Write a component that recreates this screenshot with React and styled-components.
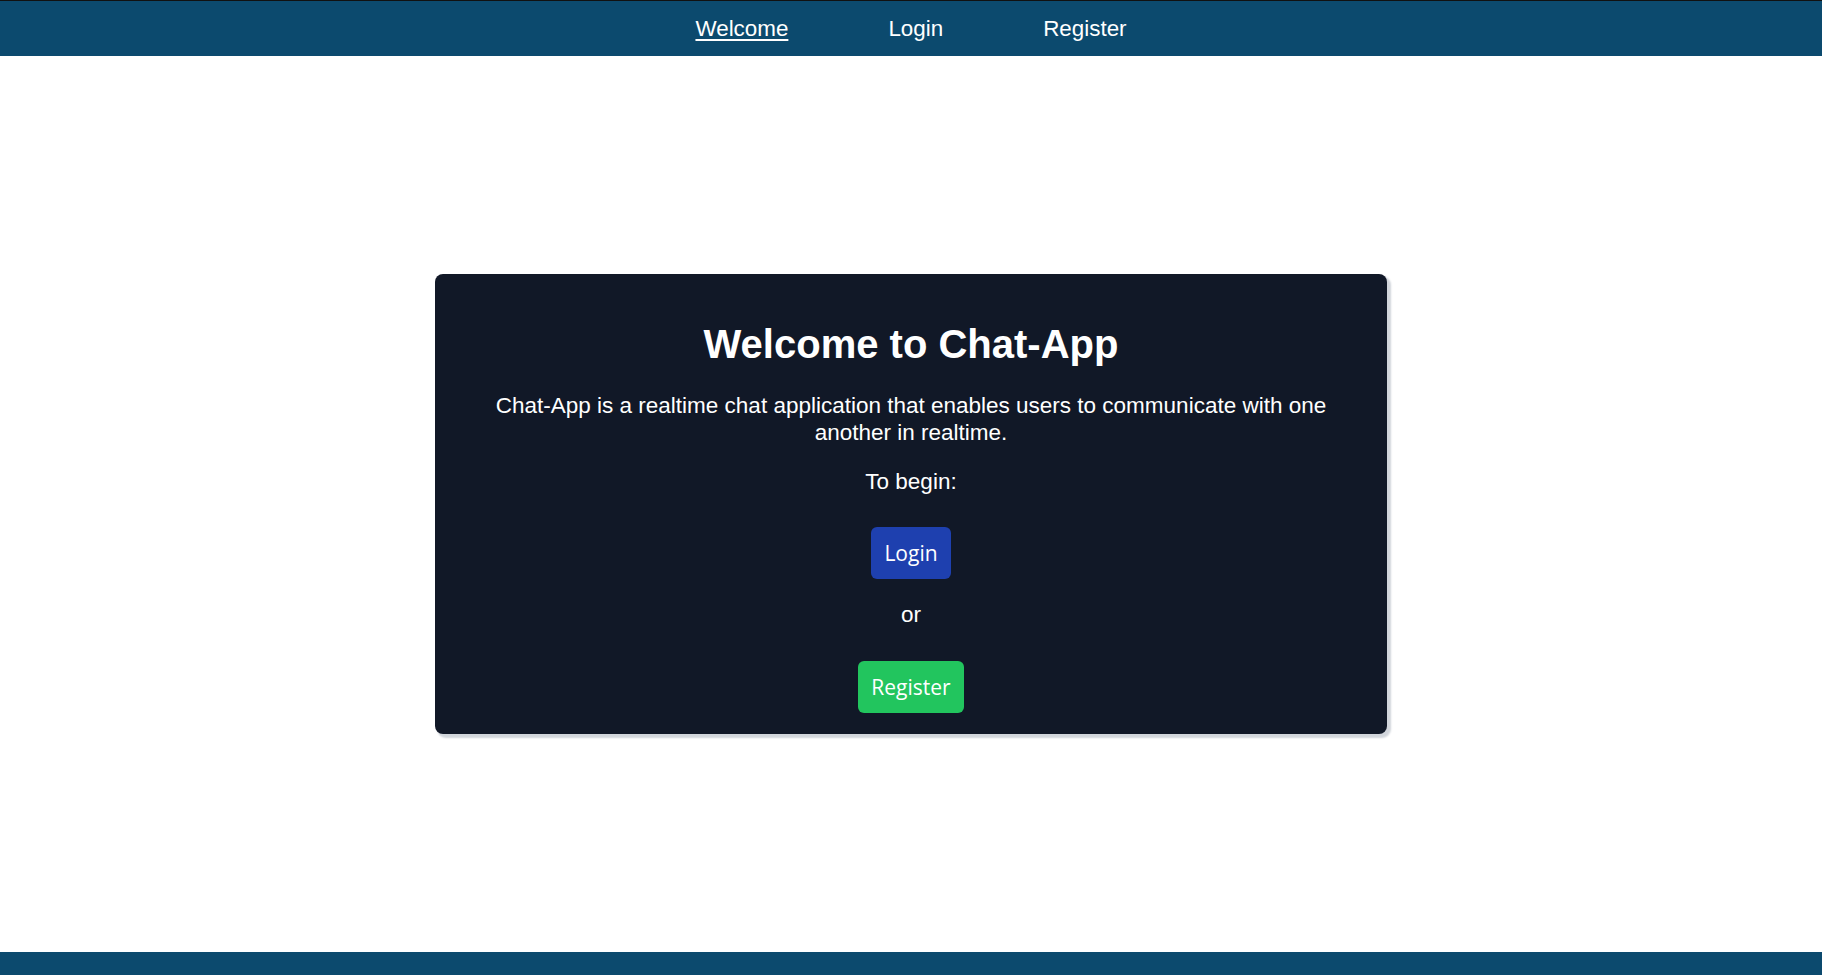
import React from 'react';
import styled, { createGlobalStyle } from 'styled-components';

const GlobalStyle = createGlobalStyle`
	html, body {
		margin: 0;
		padding: 0;
		background: #ffffff;
		font-family: "Liberation Sans", Arial, sans-serif;
	}
	#root {
		min-height: 100vh;
		display: flex;
		flex-direction: column;
	}
`;

const NavBar = styled.nav`
	display: flex;
	justify-content: center;
	align-items: center;
	gap: 100px;
	height: 55px;
	border-top: 1px solid #111111;
	background: #0c4a6e;
`;

const NavLink = styled.a`
	color: #ffffff;
	font-size: 22.4px;
	text-decoration: ${props => (props.$active ? 'underline' : 'none')};
	text-underline-offset: 3px;
	text-decoration-thickness: 2px;
	cursor: pointer;
`;

const Main = styled.main`
	flex: 1;
	display: flex;
	justify-content: center;
	align-items: center;
`;

const Card = styled.section`
	width: 952px;
	box-sizing: border-box;
	padding: 48px 44px 21px;
	border-radius: 8px;
	background: #111827;
	box-shadow: 3px 3px 2px 1px #d1d5db;
	color: #ffffff;
	text-align: center;
	display: flex;
	flex-direction: column;
	align-items: center;
`;

const Title = styled.h1`
	margin: 0;
	font-size: 40px;
	line-height: 44px;
	font-weight: 700;
`;

const Text = styled.p`
	margin: ${props => props.$top || 0}px 0 0;
	font-size: 22.5px;
	line-height: 27px;
`;

const Button = styled.button`
	margin-top: ${props => props.$top || 0}px;
	padding: 11px 13px;
	border: none;
	border-radius: 6px;
	background: ${props => props.$color};
	color: #ffffff;
	font-family: "Open Sans", "Noto Sans", sans-serif;
	font-size: 21px;
	line-height: 30px;
	cursor: pointer;
`;

const Footer = styled.footer`
	height: 23px;
	background: #0c4a6e;
`;

export default function App() {
	return (
		<>
			<GlobalStyle />
			<NavBar>
				<NavLink $active>Welcome</NavLink>
				<NavLink>Login</NavLink>
				<NavLink>Register</NavLink>
			</NavBar>
			<Main>
				<Card>
					<Title>Welcome to Chat-App</Title>
					<Text $top={26}>
						Chat-App is a realtime chat application that enables users to communicate with one another in realtime.
					</Text>
					<Text $top={22}>To begin:</Text>
					<Button $top={32} $color="#1e40af">Login</Button>
					<Text $top={22}>or</Text>
					<Button $top={33} $color="#22c55e">Register</Button>
				</Card>
			</Main>
			<Footer />
		</>
	);
}
